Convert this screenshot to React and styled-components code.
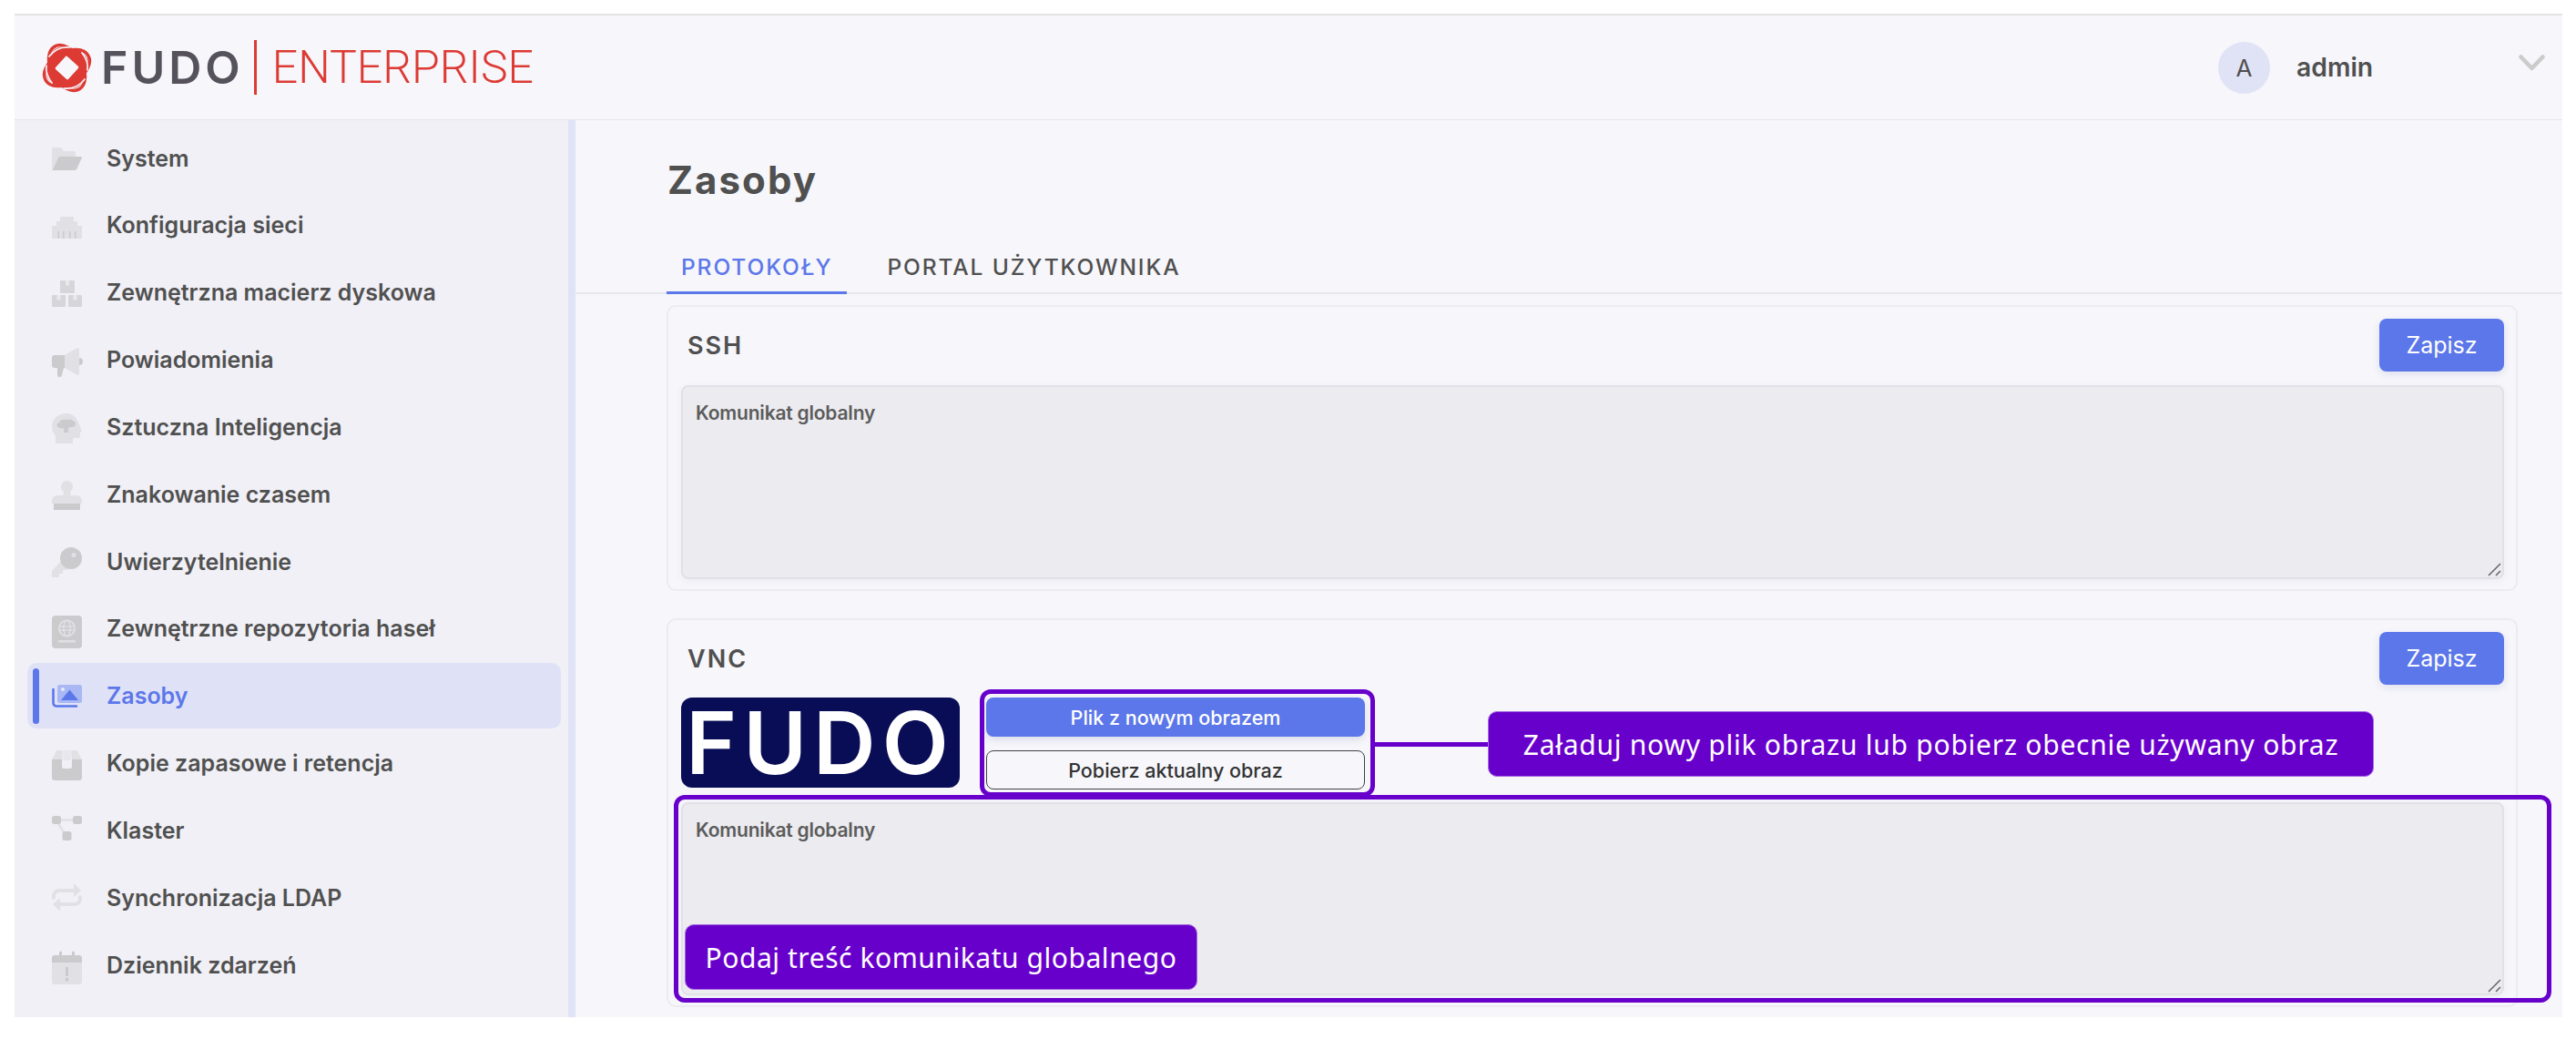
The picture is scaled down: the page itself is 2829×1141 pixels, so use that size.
import React from "react";
import styled, { createGlobalStyle } from "styled-components";

const Global = createGlobalStyle`
  html, body { margin: 0; padding: 0; background: #fff; overflow: hidden; }
  * { box-sizing: border-box; }
  body { font-family: Inter, "Liberation Sans", sans-serif; color: #505050; }
`;

const Frame = styled.div`
  margin: 15px 15px 0 16px;
  height: 1102px;
  display: flex;
  flex-direction: column;
  background: #f6f6fb;
  border-top: 2px solid #e3e3e3;
  overflow: hidden;
`;

const Header = styled.header`
  flex: none;
  height: 115px;
  display: flex;
  align-items: center;
  justify-content: space-between;
  padding: 0 19px 0 29px;
  border-bottom: 1px solid #e5e5ee;
`;

const Brand = styled.div`
  display: flex;
  align-items: center;
`;

const BrandName = styled.span`
  font-family: Inter, sans-serif;
  font-size: 50px;
  line-height: 1;
  font-weight: 600;
  color: #56525c;
  margin-left: 9px;
  letter-spacing: 4px;
`;

const BrandRule = styled.span`
  width: 3px;
  height: 60px;
  background: #dd3a34;
  margin: 0 17px 0 11px;
`;

const BrandEdition = styled.span`
  font-family: Roboto, sans-serif;
  font-size: 50px;
  line-height: 1;
  font-weight: 300;
  color: #dd3a34;
`;

const UserMenu = styled.div`
  width: 359px;
  display: flex;
  align-items: center;
`;

const Avatar = styled.div`
  width: 57px;
  height: 57px;
  border-radius: 50%;
  background: #e0e3f5;
  display: flex;
  align-items: center;
  justify-content: center;
  font-size: 26px;
  font-weight: 400;
  color: #505050;
`;

const UserName = styled.span`
  flex: 1;
  margin-left: 29px;
  font-size: 28.3px;
  font-weight: 600;
  color: #505050;
`;

const Body = styled.div`
  flex: 1;
  min-height: 0;
  display: flex;
`;

const Sidebar = styled.nav`
  flex: none;
  width: 616px;
  padding: 5.5px 8px 0 14px;
  display: flex;
  flex-direction: column;
  gap: 1.85px;
  background: #f0f0f6;
  border-right: 8px solid #dfe3f5;
`;

const NavItem = styled.div`
  position: relative;
  flex: none;
  height: 72px;
  display: flex;
  align-items: center;
  gap: 27px;
  padding-left: 27px;
  border-radius: 10px;
  background: ${(p) => (p.$active ? "#dfe2f6" : "transparent")};
  color: ${(p) => (p.$active ? "#5c77ea" : "#505050")};
  font-size: 25px;
  font-weight: 600;
  ${(p) =>
    p.$active &&
    `&::before {
      content: "";
      position: absolute;
      left: 6px;
      top: 6px;
      bottom: 5px;
      width: 7px;
      border-radius: 4px;
      background: #5c77ea;
    }`}
`;

const NavIcon = styled.svg`
  flex: none;
  width: 33px;
  height: 33px;
  overflow: visible;
`;

const Content = styled.main`
  flex: 1;
  min-width: 0;
  display: flex;
  flex-direction: column;
  overflow: hidden;
`;

const PageTitle = styled.h1`
  margin: 0;
  height: 125px;
  padding: 41px 0 0 101px;
  font-size: 42px;
  line-height: 50px;
  font-weight: 700;
  letter-spacing: 2.1px;
  color: #505050;
`;

const Tabs = styled.div`
  flex: none;
  height: 66px;
  display: flex;
  gap: 28px;
  padding-left: 100px;
  border-bottom: 2px solid #e6e6ee;
`;

const Tab = styled.div`
  height: 66px;
  padding: 16px 16px 0;
  font-size: 24.5px;
  line-height: 40px;
  font-weight: 500;
  letter-spacing: 1.9px;
  color: ${(p) => (p.$active ? "#5c77ea" : "#505050")};
  border-bottom: 3px solid ${(p) => (p.$active ? "#5c77ea" : "transparent")};
`;

const Cards = styled.div`
  padding: 12px 49px 0 100px;
  display: flex;
  flex-direction: column;
  gap: 30px;
`;

const Card = styled.section`
  position: relative;
  flex: none;
  padding: 13px 13px 11px 14px;
  border: 2px solid #ebebf2;
  border-radius: 10px;
`;

const CardHead = styled.div`
  display: flex;
  align-items: center;
  justify-content: space-between;
  padding-left: 7px;
  margin-bottom: ${(p) => p.$gap}px;
`;

const CardTitle = styled.h2`
  margin: 0;
  font-size: 27px;
  font-weight: 600;
  letter-spacing: 2px;
  color: #505050;
`;

const SaveButton = styled.button`
  width: 137px;
  height: 58px;
  border: 0;
  border-radius: 8px;
  background: #5c77ea;
  color: #fff;
  font-family: inherit;
  font-size: 25px;
  font-weight: 400;
  box-shadow: 0 3px 8px rgba(60, 70, 130, 0.12);
`;

const MessageField = styled.div`
  position: relative;
  height: ${(p) => p.$h}px;
  padding: 15px 14px;
  background: #ecebf0;
  border: 2px solid #e1e1e7;
  border-radius: 8px;
  box-shadow: 0 2px 8px rgba(60, 60, 90, 0.05);
  font-size: 21px;
  line-height: 27px;
  font-weight: 600;
  letter-spacing: -0.2px;
  color: #5c5c5c;
`;

const Grip = styled.svg`
  position: absolute;
  right: 1px;
  bottom: 1px;
  width: 16px;
  height: 16px;
`;

const ImageRow = styled.div`
  display: flex;
  align-items: flex-start;
  gap: 29px;
  height: 101px;
  margin-bottom: 14px;
`;

const LogoPreview = styled.div`
  flex: none;
  width: 306px;
  height: 99px;
  border-radius: 12px;
  background: #080d56;
  display: flex;
  align-items: center;
  justify-content: center;
  font-size: 95px;
  line-height: 1;
  font-weight: 600;
  letter-spacing: 7px;
  color: #fff;
`;

const FileActions = styled.div`
  width: 416px;
  display: flex;
  flex-direction: column;
  gap: 15px;
`;

const FileButton = styled.button`
  height: 43px;
  border-radius: 8px;
  font-family: inherit;
  font-size: 21.5px;
  font-weight: 500;
  border: ${(p) => (p.$primary ? "0" : "1.5px solid #3f3f46")};
  background: ${(p) => (p.$primary ? "#5c77ea" : "#f6f6fb")};
  color: ${(p) => (p.$primary ? "#fff" : "#333")};
  box-shadow: ${(p) => (p.$primary ? "0 3px 8px rgba(60,70,130,.15)" : "none")};
`;

const Highlight = styled.div`
  position: absolute;
  left: ${(p) => p.$x}px;
  top: ${(p) => p.$y}px;
  width: ${(p) => p.$w}px;
  height: ${(p) => p.$h}px;
  border: 5px solid #6800cc;
  border-radius: 12px;
`;

const Connector = styled.div`
  position: absolute;
  left: 776px;
  top: 134px;
  width: 124px;
  height: 5px;
  background: #6800cc;
`;

const Callout = styled.div`
  position: absolute;
  left: ${(p) => p.$x}px;
  top: ${(p) => p.$y}px;
  width: ${(p) => p.$w}px;
  height: 72px;
  display: flex;
  align-items: center;
  justify-content: center;
  background: #6800cc;
  border: 1px solid #a56be0;
  border-radius: 10px;
  color: #fff;
  font-family: "Noto Sans", sans-serif;
  font-size: 30px;
  letter-spacing: ${(p) => p.$spacing}px;
  white-space: nowrap;
`;

const L = "#e0e0e5";
const D = "#cbcbce";

const FuIcon = ({ children }) => (
  <NavIcon viewBox="0 0 33 33" aria-hidden="true">
    {children}
  </NavIcon>
);

const icons = {
  folder: (
    <>
      <path d="M0 7a2 2 0 0 1 2-2h8l3 4h11a2 2 0 0 1 2 2v4H9L0 28z" fill={L} />
      <path d="M8 15h24a1 1 0 0 1 1 1l-6 13a2 2 0 0 1-2 1H0z" fill={D} />
    </>
  ),
  network: (
    <>
      <path d="M9 8a1 1 0 0 1 1-1h13a1 1 0 0 1 1 1v4h4v5h4a1 1 0 0 1 1 1v12a1 1 0 0 1-1 1H1a1 1 0 0 1-1-1V18a1 1 0 0 1 1-1h4v-5h4z" fill={L} />
      <path d="M6.5 23h1.500v8H6.500zM12 23h1.500v8H12zM19 23h1.500v8H19zM25 23h1.500v8H25z" fill={D} />
    </>
  ),
  boxes: (
    <>
      <path d="M10 3h14a1 1 0 0 1 1 1v12a1 1 0 0 1-1 1H10a1 1 0 0 1-1-1V4a1 1 0 0 1 1-1zM1 19h13a1 1 0 0 1 1 1v11a1 1 0 0 1-1 1H1a1 1 0 0 1-1-1V20a1 1 0 0 1 1-1zM19 19h13a1 1 0 0 1 1 1v11a1 1 0 0 1-1 1H19a1 1 0 0 1-1-1V20a1 1 0 0 1 1-1z" fill="#d6d6da" />
      <path d="M15 3h4v6l-2-1-2 1zM5.500 19h4v6l-2-1-2 1zM23.500 19h4v6l-2-1-2 1z" fill="#e9e9ed" />
    </>
  ),
  megaphone: (
    <>
      <path d="M14 11 28 3a2 2 0 0 1 2 2v26a2 2 0 0 1-2 2l-14-8z" fill={L} />
      <path d="M3 11h11v14h-1l-2 8a2 2 0 0 1-2 2H8a2 2 0 0 1-2-2v-8H3a3 3 0 0 1-3-3v-8a3 3 0 0 1 3-3zM30 14a4 4 0 0 1 0 8z" fill={D} />
    </>
  ),
  head: (
    <>
      <path d="M16 2C7 2 0 8 0 16c0 5 2 8 4 11v8h19v-6h6a2 2 0 0 0 2-2v-5h2l-3-8C28 7 23 2 16 2z" fill={L} />
      <path d="M8 12c1-3 5-4 8-3 3-1 8 0 10 3 1 3-2 5-5 5-1 0-2 1-3 1v5h-5v-5c-3 1-6 0-7-2-1-1 0-3 2-4z" fill={D} />
    </>
  ),
  stamp: (
    <>
      <path d="M16.500 2a6.500 6.500 0 0 1 4 11.600V18H27a6 6 0 0 1 6 6v3H0v-3a6 6 0 0 1 6-6h6.500v-4.400A6.500 6.500 0 0 1 16.500 2z" fill={L} />
      <path d="M2 27h29v7H2z" fill={D} />
    </>
  ),
  key: (
    <>
      <path d="M13 13 0 27v7h8v-4h4v-4h4l5-5z" fill={L} />
      <circle cx="21" cy="13" r="12" fill={D} />
      <circle cx="24" cy="9.500" r="2.600" fill={L} />
    </>
  ),
  passport: (
    <>
      <rect x="0" y="2" width="33" height="36" rx="4" fill={D} />
      <circle cx="16.500" cy="16" r="8.700" fill="none" stroke={L} strokeWidth="1.800" />
      <ellipse cx="16.500" cy="16" rx="3.600" ry="8.700" fill="none" stroke={L} strokeWidth="1.500" />
      <path d="M8 14h17M8 18h17" stroke={L} strokeWidth="1.500" />
      <rect x="7" y="29" width="19" height="2.400" rx="1" fill={L} />
    </>
  ),
  images: (
    <>
      <rect x="6" y="4" width="27" height="20" rx="2.500" fill="#a9b8f4" />
      <path d="M10 21 19.500 9.500 29 21z" fill="#5c77ea" />
      <circle cx="12" cy="9" r="2" fill="#e6e9fb" />
      <path d="M1.500 9v15a3.500 3.500 0 0 0 3.500 3.500h22" fill="none" stroke="#5c77ea" strokeWidth="2.600" strokeLinecap="round" />
    </>
  ),
  box: (
    <>
      <path d="M5 2h7l-1 11H0zM21 2h7l5 11H22z" fill={L} />
      <path d="M13 2h7l1 11h-9z" fill={L} opacity="0.55" />
      <path d="M0 12h11v8a2 2 0 0 0 2 2h7a2 2 0 0 0 2-2v-8h11v20a3 3 0 0 1-3 3H3a3 3 0 0 1-3-3z" fill={D} />
    </>
  ),
  cluster: (
    <>
      <path d="M8 5.500h17M6 8l9 14" stroke={L} strokeWidth="2.400" fill="none" />
      <rect x="0" y="1" width="10" height="9" rx="2.500" fill={D} />
      <rect x="23" y="1" width="10" height="9" rx="2.500" fill={D} />
      <rect x="11.500" y="18" width="10" height="10" rx="2.500" fill={D} />
    </>
  ),
  sync: (
    <>
      <path d="M2 17v-2a6 6 0 0 1 6-6h17" fill="none" stroke={L} strokeWidth="4" strokeLinecap="round" />
      <path d="M31 16v2a6 6 0 0 1-6 6H9" fill="none" stroke={L} strokeWidth="4" strokeLinecap="round" />
      <path d="M24 1l8 8-8 7zM9 17l-8 7 8 8z" fill={L} />
    </>
  ),
  calendar: (
    <>
      <path d="M0 14h33v21a3 3 0 0 1-3 3H3a3 3 0 0 1-3-3z" fill={L} />
      <path d="M3 6h5V3a1.500 1.500 0 0 1 3 0v3h11V3a1.500 1.500 0 0 1 3 0v3h5a3 3 0 0 1 3 3v5H0V9a3 3 0 0 1 3-3z" fill={D} />
      <path d="M15 19h3v10h-3zM14.800 31h3.400v3.500h-3.400z" fill={D} />
    </>
  ),
};

const NAV = [
  ["folder", "System"],
  ["network", "Konfiguracja sieci"],
  ["boxes", "Zewnętrzna macierz dyskowa"],
  ["megaphone", "Powiadomienia"],
  ["head", "Sztuczna Inteligencja"],
  ["stamp", "Znakowanie czasem"],
  ["key", "Uwierzytelnienie"],
  ["passport", "Zewnętrzne repozytoria haseł"],
  ["images", "Zasoby", true],
  ["box", "Kopie zapasowe i retencja"],
  ["cluster", "Klaster"],
  ["sync", "Synchronizacja LDAP"],
  ["calendar", "Dziennik zdarzeń"],
];

const Mark = () => (
  <svg width="57" height="57" viewBox="0 0 57 57" aria-hidden="true">
    <g fill="none" stroke="#dd3a34">
      <ellipse cx="28.500" cy="28.500" rx="27" ry="17" strokeWidth="3.500" transform="rotate(-30 28.500 28.500)" />
      <ellipse cx="28.500" cy="28.500" rx="27" ry="17" strokeWidth="3.500" transform="rotate(60 28.500 28.500)" />
    </g>
    <rect x="7" y="7" width="43" height="43" rx="15" fill="#dd3a34" transform="rotate(15 28.500 28.500)" />
    <g fill="none" stroke="#f6f6fb" strokeWidth="1.700" strokeLinecap="round">
      <path d="M9 16C15 8 23 5 32 6" />
      <path d="M48 41C42 49 34 52 25 51" />
      <path d="M12 45C8 40 5 33 6 26" />
      <path d="M45 12c4 5 7 12 6 19" />
    </g>
    <rect x="19" y="19" width="19" height="19" rx="1.500" fill="#f6f6fb" transform="rotate(42 28.500 28.500)" />
  </svg>
);

const Chevron = () => (
  <svg width="29" height="18" viewBox="0 0 29 18" aria-hidden="true" style={{ marginTop: -10 }}>
    <path d="M2.500 2.500 14.500 15 26.500 2.500" fill="none" stroke="#cbcbcb" strokeWidth="4.500" strokeLinecap="round" strokeLinejoin="round" />
  </svg>
);

const Field = ({ height }) => (
  <MessageField $h={height}>
    Komunikat globalny
    <Grip viewBox="0 0 16 16" aria-hidden="true">
      <path d="M2 15 15 2M10 15l5-5" stroke="#666" strokeWidth="1.500" fill="none" />
    </Grip>
  </MessageField>
);

export default function App() {
  return (
    <>
      <Global />
      <Frame>
        <Header>
          <Brand>
            <Mark />
            <BrandName>FUDO</BrandName>
            <BrandRule />
            <BrandEdition>ENTERPRISE</BrandEdition>
          </Brand>
          <UserMenu>
            <Avatar>A</Avatar>
            <UserName>admin</UserName>
            <Chevron />
          </UserMenu>
        </Header>
        <Body>
          <Sidebar>
            {NAV.map(([icon, label, active]) => (
              <NavItem key={label} $active={active}>
                <FuIcon>{icons[icon]}</FuIcon>
                {label}
              </NavItem>
            ))}
          </Sidebar>
          <Content>
            <PageTitle>Zasoby</PageTitle>
            <Tabs>
              <Tab $active>PROTOKOŁY</Tab>
              <Tab>PORTAL UŻYTKOWNIKA</Tab>
            </Tabs>
            <Cards>
              <Card>
                <CardHead $gap={15}>
                  <CardTitle>SSH</CardTitle>
                  <SaveButton>Zapisz</SaveButton>
                </CardHead>
                <Field height={213} />
              </Card>
              <Card>
                <CardHead $gap={14}>
                  <CardTitle>VNC</CardTitle>
                  <SaveButton>Zapisz</SaveButton>
                </CardHead>
                <ImageRow>
                  <LogoPreview>FUDO</LogoPreview>
                  <FileActions>
                    <FileButton $primary>Plik z nowym obrazem</FileButton>
                    <FileButton>Pobierz aktualny obraz</FileButton>
                  </FileActions>
                </ImageRow>
                <Field height={212} />
                <Highlight $x={342} $y={76} $w={434} $h={118} />
                <Highlight $x={6} $y={192} $w={2062} $h={228} />
                <Connector />
                <Callout $x={900} $y={100} $w={973} $spacing={0.75}>
                  Załaduj nowy plik obrazu lub pobierz obecnie używany obraz
                </Callout>
                <Callout $x={18} $y={334} $w={563} $spacing={0.55}>
                  Podaj treść komunikatu globalnego
                </Callout>
              </Card>
            </Cards>
          </Content>
        </Body>
      </Frame>
    </>
  );
}
